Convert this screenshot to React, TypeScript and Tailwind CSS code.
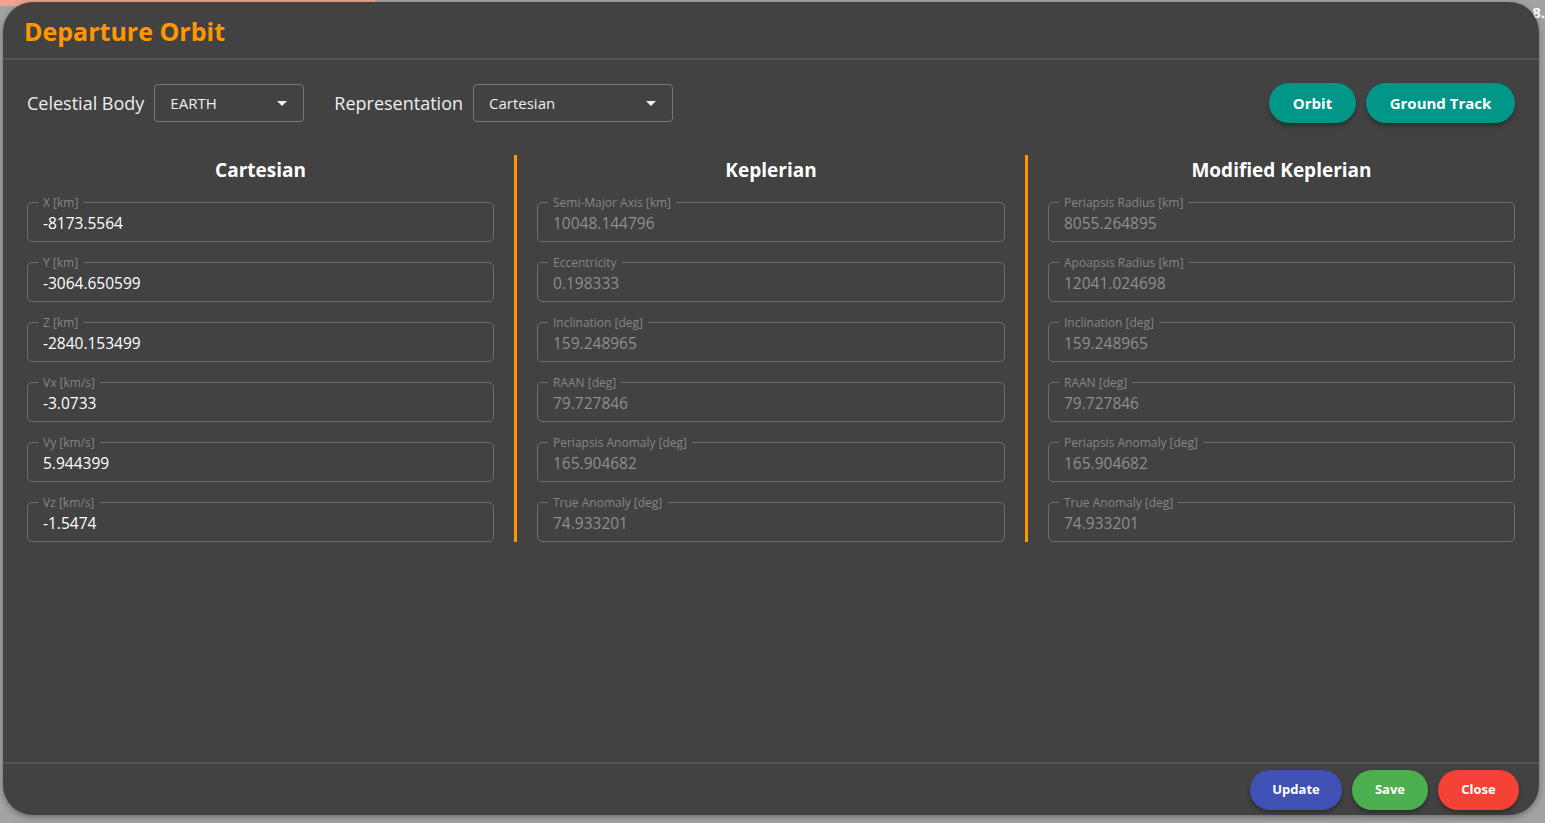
import React from "react";

const font = { fontFamily: '"Open Sans", "Noto Sans", sans-serif' };

type F = { label: string; value: string };

const cart: F[] = [
  { label: "X [km]", value: "-8173.5564" },
  { label: "Y [km]", value: "-3064.650599" },
  { label: "Z [km]", value: "-2840.153499" },
  { label: "Vx [km/s]", value: "-3.0733" },
  { label: "Vy [km/s]", value: "5.944399" },
  { label: "Vz [km/s]", value: "-1.5474" },
];
const kep: F[] = [
  { label: "Semi-Major Axis [km]", value: "10048.144796" },
  { label: "Eccentricity", value: "0.198333" },
  { label: "Inclination [deg]", value: "159.248965" },
  { label: "RAAN [deg]", value: "79.727846" },
  { label: "Periapsis Anomaly [deg]", value: "165.904682" },
  { label: "True Anomaly [deg]", value: "74.933201" },
];
const mkep: F[] = [
  { label: "Periapsis Radius [km]", value: "8055.264895" },
  { label: "Apoapsis Radius [km]", value: "12041.024698" },
  { label: "Inclination [deg]", value: "159.248965" },
  { label: "RAAN [deg]", value: "79.727846" },
  { label: "Periapsis Anomaly [deg]", value: "165.904682" },
  { label: "True Anomaly [deg]", value: "74.933201" },
];

function Field({ f, disabled }: { f: F; disabled?: boolean }) {
  return (
    <div className="relative h-[40px] rounded-[5px] border border-[#6e6e6e]">
      <span className="absolute -top-[7px] left-[10px] bg-[#424242] px-[5px] text-[12px] leading-[14px] text-[#858585]">
        {f.label}
      </span>
      <div
        className={
          "px-[15px] text-[15.5px] leading-[40px] " +
          (disabled ? "text-[#8e8e8e]" : "text-white")
        }
      >
        {f.value}
      </div>
    </div>
  );
}

function Column({ title, fields, disabled, w }: { title: string; fields: F[]; disabled?: boolean; w: string }) {
  return (
    <div className={"flex flex-col " + w}>
      <div className="h-[30px] text-center text-[19px] font-bold leading-[30px] text-white">{title}</div>
      <div className="mt-[17px] flex flex-col gap-[20px]">
        {fields.map((f) => (
          <Field key={f.label} f={f} disabled={disabled} />
        ))}
      </div>
    </div>
  );
}

function Select({ value, w }: { value: string; w: string }) {
  return (
    <div
      className={
        "flex h-[38px] items-center justify-between rounded-[4px] border border-[#787878] pl-[15px] pr-[16px] text-[15px] text-[#eeeeee] " +
        w
      }
    >
      <span>{value}</span>
      <svg width="10" height="5" viewBox="0 0 10 5">
        <path d="M0 0 L10 0 L5 5 Z" fill="#eeeeee" />
      </svg>
    </div>
  );
}

function Pill({ children, cls }: { children: React.ReactNode; cls: string }) {
  return (
    <button
      className={
        "flex h-[40px] items-center justify-center rounded-full font-bold text-white shadow-[0_3px_4px_rgba(0,0,0,0.3)] " +
        cls
      }
    >
      {children}
    </button>
  );
}

export default function App() {
  return (
    <div className="relative h-[823px] w-full overflow-hidden bg-[#a3a3a3]" style={font}>
      <div className="absolute left-0 top-0 h-[6px] w-[375px] bg-[#f0a38e]" />
      <div className="absolute right-0 top-[1px] text-[15px] font-bold text-white">8.</div>
      <div className="relative ml-[3px] mt-[2px] flex h-[813px] w-[1536px] flex-col rounded-[30px] bg-[#424242] shadow-[0_2px_6px_rgba(0,0,0,0.35)]">
        <div className="flex h-[58px] items-center border-b-2 border-[#555555] px-[21px] pt-[3px]">
          <span className="text-[25px] font-bold text-[#ff9800]">Departure Orbit</span>
        </div>
        <div className="flex-1">
          <div className="mt-[23px] flex h-[40px] items-center px-[24px]">
            <span className="mr-[10px] text-[18px] text-[#eeeeee]">Celestial Body</span>
            <Select value="EARTH" w="w-[150px]" />
            <span className="ml-[30px] mr-[10px] text-[18px] text-[#eeeeee]">Representation</span>
            <Select value="Cartesian" w="w-[200px]" />
            <div className="flex-1" />
            <Pill cls="w-[87px] bg-[#009688] text-[15px]">Orbit</Pill>
            <Pill cls="ml-[10px] w-[149px] bg-[#009688] text-[15px]">Ground Track</Pill>
          </div>
          <div className="mt-[32px] flex px-[24px]">
            <Column title="Cartesian" fields={cart} w="w-[467px]" />
            <div className="mx-[20px] w-[3px] bg-[#ff9800]" />
            <Column title="Keplerian" fields={kep} disabled w="w-[468px]" />
            <div className="mx-[20px] w-[3px] bg-[#ff9800]" />
            <Column title="Modified Keplerian" fields={mkep} disabled w="w-[467px]" />
          </div>
        </div>
        <div className="flex h-[53px] items-start justify-end gap-[10px] border-t-2 border-[#555555] pr-[20px] pt-[6px]">
          <Pill cls="w-[92px] bg-[#3f51b5] text-[13px]">Update</Pill>
          <Pill cls="w-[76px] bg-[#4caf50] text-[13px]">Save</Pill>
          <Pill cls="w-[81px] bg-[#f44336] text-[13px]">Close</Pill>
        </div>
      </div>
    </div>
  );
}
